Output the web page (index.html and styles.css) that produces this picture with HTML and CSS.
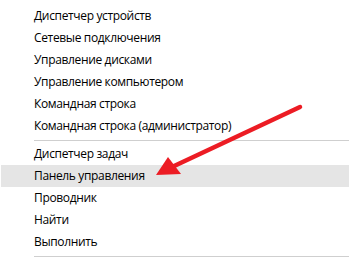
FILE: index.html
```html
<!DOCTYPE html>
<html lang="ru">
<head>
    <meta charset="UTF-8">
    <title>Меню Win+X</title>
    <link rel="stylesheet" href="styles.css">
</head>
<body>
    <div class="menu">
        <ul class="group">
            <li class="item">Диспетчер устройств</li>
            <li class="item">Сетевые подключения</li>
            <li class="item">Управление дисками</li>
            <li class="item">Управление компьютером</li>
            <li class="item">Командная строка</li>
            <li class="item">Командная строка (администратор)</li>
        </ul>
        <div class="sep"></div>
        <ul class="group">
            <li class="item">Диспетчер задач</li>
            <li class="item active">Панель управления</li>
            <li class="item">Проводник</li>
            <li class="item">Найти</li>
            <li class="item">Выполнить</li>
        </ul>
        <div class="sep"></div>
    </div>

    <!-- red pointer drawn on top of the screenshot -->
    <svg class="pointer" width="349" height="260" viewBox="0 0 349 260">
        <line x1="300" y1="107" x2="172" y2="167" stroke="#ec1c24" stroke-width="4.5" stroke-linecap="round"/>
        <polygon points="156,175 168,157 181,174" fill="#ec1c24"/>
    </svg>
</body>
</html>
```

FILE: styles.css
```css
*{
    margin: 0; padding: 0;
    box-sizing: border-box;
}
body{
    width: 349px;
    height: 260px;
    overflow: hidden;
    background: white;
    font-family: "Open Sans", "Noto Sans", sans-serif;
    font-size: 12px;
    letter-spacing: -0.35px;
    color: black;
    position: relative;
}
.menu{
    padding-top: 5px;
    padding-left: 1px;
}
.menu .group{
    list-style: none;
}
.menu .item{
    height: 22px;
    line-height: 22px;
    padding-left: 33px;
    white-space: nowrap;
}
.menu .item.active{
    background: #e5e5e5;
}
.menu .sep{
    height: 1px;
    margin: 3px 0 2px 33px;
    background: #cfcfcf;
}
.pointer{
    position: absolute;
    left: 0; top: 0;
}
```
